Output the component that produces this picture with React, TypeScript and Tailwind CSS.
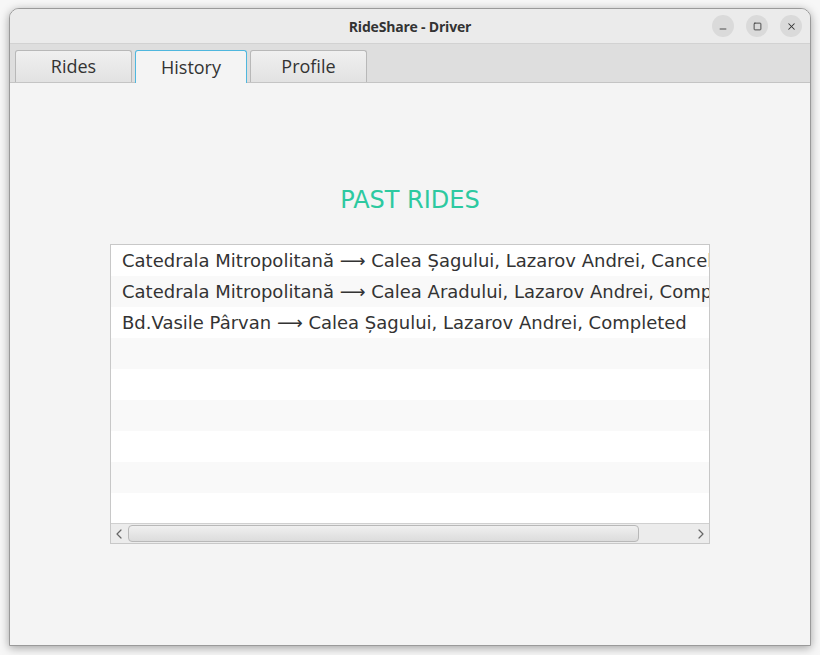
import { ChevronLeft, ChevronRight, Minus, Square, X } from "lucide-react";

const rides = [
  "Catedrala Mitropolitană ⟶ Calea Șagului, Lazarov Andrei, Cancelled",
  "Catedrala Mitropolitană ⟶ Calea Aradului, Lazarov Andrei, Completed",
  "Bd.Vasile Pârvan ⟶ Calea Șagului, Lazarov Andrei, Completed",
  "",
  "",
  "",
  "",
  "",
  "",
];

const tabs = [
  { label: "Rides", active: false },
  { label: "History", active: true },
  { label: "Profile", active: false },
];

export default function App() {
  return (
    <div className="w-[820px] h-[655px] bg-[#f7f7f7] pt-[8px] px-[9px] overflow-hidden">
      <div className="w-[802px] h-[638px] flex flex-col rounded-t-[10px] border border-[#9a9a9a] bg-[#f4f4f4] overflow-hidden shadow-[0_2px_10px_rgba(0,0,0,0.35)]">
        {/* title bar */}
        <div className="h-[35px] shrink-0 bg-[#ebebeb] border-b border-[#d2d2d2] flex items-center relative">
          <div className="mx-auto text-[14px] font-bold text-[#333] font-['Open_Sans',sans-serif] tracking-[-0.2px]">
            RideShare - Driver
          </div>
          <div className="absolute right-[8px] top-[6px] flex gap-[12px]">
            <div className="w-[22px] h-[22px] rounded-full bg-[#dadada] flex items-center justify-center">
              <Minus className="w-[10px] h-[10px] text-[#333] mt-[5px]" strokeWidth={2} />
            </div>
            <div className="w-[22px] h-[22px] rounded-full bg-[#dadada] flex items-center justify-center">
              <Square className="w-[9px] h-[9px] text-[#333]" strokeWidth={2.2} />
            </div>
            <div className="w-[22px] h-[22px] rounded-full bg-[#dadada] flex items-center justify-center">
              <X className="w-[11px] h-[11px] text-[#333]" strokeWidth={2.2} />
            </div>
          </div>
        </div>

        {/* tab bar */}
        <div className="h-[39px] shrink-0 bg-[#dedede] border-b border-[#c4c4c4] flex items-end pl-[5px] gap-[3px]">
          {tabs.map((t) => (
            <div
              key={t.label}
              className={
                t.active
                  ? "h-[33px] w-[112px] -mb-px flex items-center justify-center rounded-t-[3px] border border-b-0 border-[#4fb7de] bg-[#f4f4f4] text-[18px] text-[#333] font-['Open_Sans',sans-serif]"
                  : "h-[32px] w-[117px] flex items-center justify-center rounded-t-[3px] border border-b-0 border-[#b8b8b8] bg-gradient-to-b from-[#f0f0f0] to-[#e2e2e2] text-[18px] text-[#333] font-['Open_Sans',sans-serif]"
              }
            >
              {t.label}
            </div>
          ))}
        </div>

        {/* content */}
        <div className="flex-1 flex flex-col items-center">
          <div className="mt-[102px] text-[24px] leading-[30px] text-[#2dc9a0] font-['DejaVu_Sans',sans-serif]">
            PAST RIDES
          </div>
          <div className="mt-[29px] w-[600px] h-[300px] border border-[#c8c8c8] bg-white flex flex-col">
            <div className="flex-1 overflow-hidden">
              {rides.map((r, i) => (
                <div
                  key={i}
                  className={`h-[31px] pl-[11px] flex items-center whitespace-nowrap text-[18px] text-[#333] font-['DejaVu_Sans',sans-serif] ${
                    i % 2 === 1 ? "bg-[#f9f9f9]" : "bg-white"
                  }`}
                >
                  {r}
                </div>
              ))}
            </div>
            <div className="h-[20px] shrink-0 border-t border-[#d0d0d0] bg-[#ececec] flex items-center">
              <ChevronLeft className="w-[16px] h-[16px] text-[#666]" strokeWidth={1.8} />
              <div className="ml-[1px] w-[511px] h-[17px] rounded-[4px] border border-[#b8b8b8] bg-gradient-to-b from-[#f0f0f0] to-[#dcdcdc]" />
              <div className="flex-1" />
              <ChevronRight className="w-[16px] h-[16px] text-[#666]" strokeWidth={1.8} />
            </div>
          </div>
        </div>
      </div>
    </div>
  );
}
